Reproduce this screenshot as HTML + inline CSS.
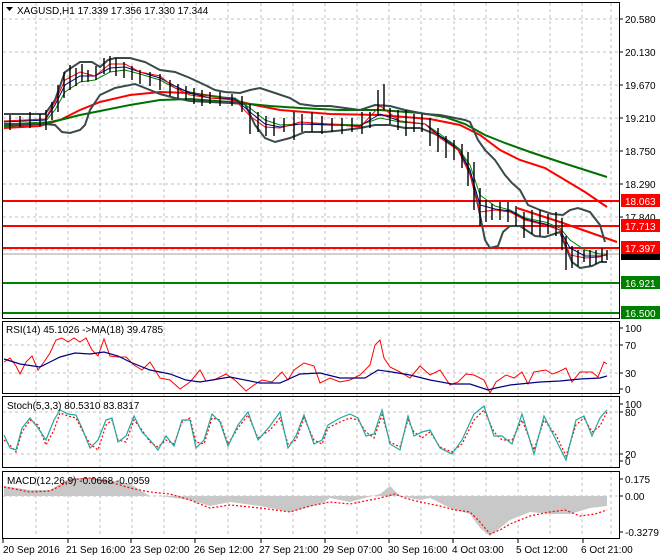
<!DOCTYPE html>
<html><head><meta charset="utf-8"><style>
body{margin:0;background:#fff;}
svg{display:block;font-family:"Liberation Sans",sans-serif;}
text{font-size:10px;fill:#000;}
</style></head><body>
<svg width="660" height="560" viewBox="0 0 660 560" xmlns="http://www.w3.org/2000/svg">
<rect width="660" height="560" fill="#fff"/>
<!-- grid -->
<g stroke="#c0c0c0" stroke-dasharray="3,3" stroke-width="1">
<path d="M36 3V537M68 3V537M100 3V537M132 3V537M164 3V537M196 3V537M228 3V537M261 3V537M293 3V537M325 3V537M357 3V537M389 3V537M421 3V537M454 3V537M486 3V537M518 3V537M550 3V537M582 3V537M611 3V537"/>
<path d="M3 19H619M3 52H619M3 85H619M3 118H619M3 151H619M3 184H619M3 217H619M3 250H619M3 283H619"/>
<path d="M3 345H619M3 373H619M3 412H619M3 454H619M3 496H619"/>
</g>
<!-- panel frames -->
<g fill="none" stroke="#000" stroke-width="1">
<rect x="2.5" y="2.5" width="617" height="316"/>
<rect x="2.5" y="321.5" width="617" height="72"/>
<rect x="2.5" y="396.5" width="617" height="71"/>
<rect x="2.5" y="471.5" width="617" height="67"/>
</g>
<!-- ticks -->
<g stroke="#000"><path d="M620 19h3M620 52h3M620 85h3M620 118h3M620 151h3M620 184h3M620 217h3M620 328h3M620 345h3M620 373h3M620 389h3M620 404h3M620 412h3M620 454h3M620 461h3M620 479h3M620 496h3M620 532h3"/></g>
<!-- horizontal levels -->
<g stroke-width="2">
<path d="M3 201H619M3 226H619M3 248H619" stroke="#ff0000"/>
<path d="M3 283H619M3 313H619" stroke="#008000"/>
</g>
<path d="M3 254H619" stroke="#a0a0a0"/>
<!-- long MAs -->
<polyline fill="none" stroke="#ff0000" stroke-width="2" points="4,128 40,126 60,120 80,110 100,102 130,95 160,92 190,93 220,97 250,104 280,110 330,114 380,115 430,119 460,125 480,135 500,150 520,160 545,168 565,180 585,192 607,207"/>
<polyline fill="none" stroke="#007000" stroke-width="2" points="4,126 40,124 60,120 80,115 100,111 130,105 160,100 190,99 230,102 270,106 300,108 340,110 380,110 420,113 445,117 465,124 485,135 505,143 530,152 560,162 585,170 607,177"/>
<polyline fill="none" stroke="#ff0000" stroke-width="2" points="517,208 560,222 617,242"/>
<!-- bollinger -->
<g fill="none" stroke="#3a4a4a" stroke-width="2">
<polyline points="4,114 45,114 55,100 65,72 80,62 92,62 100,67 108,60 115,58 130,58 145,62 160,70 175,72 190,78 205,85 215,90 225,92 240,93 250,90 260,88 275,93 290,98 300,104 315,106 330,106 345,108 360,110 375,105 390,106 405,110 425,114 440,115 455,118 465,120 470,122 478,140 485,150 495,160 505,175 512,183 520,190 528,205 540,210 552,214 563,215 570,210 578,208 590,212 600,225 605,242"/>
<polyline points="4,124 45,124 55,125 62,132 70,133 80,130 85,125 90,110 100,95 115,88 135,84 150,90 160,94 175,98 190,101 210,102 230,103 245,104 255,125 265,138 275,142 290,138 305,132 325,132 345,130 360,128 375,125 390,125 405,128 420,128 435,134 450,142 460,150 470,172 478,205 485,240 490,248 498,246 503,232 510,226 520,226 535,236 545,237 560,232 567,250 572,262 580,268 592,266 600,262 607,262"/>
</g>
<!-- inner MAs -->
<polyline fill="none" stroke="#008000" stroke-width="1" points="4,124 45,122 55,110 65,92 80,82 95,80 110,72 125,70 140,74 160,80 175,88 190,92 210,96 235,98 250,108 265,120 280,125 300,124 330,124 360,125 380,118 400,122 425,124 440,134 458,148 470,165 480,195 495,206 510,210 525,218 545,222 560,228 570,240 585,250 600,254 607,254"/>
<polyline fill="none" stroke="#000080" stroke-width="1" points="4,122 45,120 55,105 65,85 80,76 95,76 110,68 125,67 140,72 160,78 175,86 190,93 210,98 235,99 250,112 265,124 280,127 300,124 330,125 360,126 380,114 400,121 425,124 440,136 458,150 470,170 480,205 495,209 510,211 525,219 545,224 560,230 570,248 585,256 600,256 607,255"/>
<polyline fill="none" stroke="#ff0000" stroke-width="1" points="4,121 45,119 55,102 65,80 80,72 95,76 110,64 125,64 140,72 160,76 175,88 190,95 210,98 235,100 250,116 265,127 280,128 300,122 330,124 360,127 380,106 400,121 425,124 440,138 458,150 470,175 480,212 495,210 510,212 525,220 545,225 560,230 570,255 585,258 600,257 607,254"/>
<!-- candles -->
<g stroke="#000" stroke-width="1.4">
<path d="M10 115V130M20 116V127M30 112V128M40 114V126M46 110V130M52 102V120M58 85V112M64 72V98M70 65V90M76 68V86M82 64V82M88 70V82M96 66V80M104 58V74M110 56V72M116 58V76M124 62V78M132 66V80M140 70V84M150 72V86M160 74V90M170 80V96M178 84V98M186 86V100M194 88V104M202 90V106M210 92V104M220 92V106M232 94V106M242 96V112M250 104V134M258 112V132M266 116V136M274 118V136M284 118V132M294 112V140M302 114V132M312 112V132M322 116V134M332 118V132M342 118V134M352 118V132M362 112V134M370 112V128M378 90V116M384 84V110M390 108V124M398 110V130M406 110V136M414 114V132M422 114V132M430 118V146M438 128V152M446 136V158M454 140V160M462 144V168M468 152V186M474 162V210M480 188V226M486 200V222M492 204V220M500 202V220M508 202V222M516 206V226M524 212V238M532 210V234M540 210V236M548 214V234M556 212V236M562 218V250M566 236V270M572 246V268M578 250V266M584 250V262M590 250V266M596 250V264M602 248V262M607 250V260"/>
</g>
<!-- RSI -->
<polyline fill="none" stroke="#ff0000" stroke-width="1" points="4,362 10,358 16,366 20,374 26,362 32,356 38,370 44,362 50,353 56,340 62,338 68,342 74,338 80,342 86,338 92,350 98,356 104,339 110,356 118,357 126,357 134,365 142,370 150,362 160,378 170,380 180,389 190,382 200,370 206,381 214,380 226,374 236,381 246,391 254,385 262,380 272,382 282,372 288,380 294,370 304,363 314,366 320,383 330,378 340,382 350,380 360,375 370,365 375,345 380,340 384,358 390,367 400,372 410,378 420,366 430,375 440,370 450,385 458,382 466,374 474,375 484,380 490,393 496,382 506,375 514,378 522,372 528,384 534,372 546,370 552,374 558,372 566,368 572,382 580,372 592,372 598,377 604,362 607,364"/>
<polyline fill="none" stroke="#000080" stroke-width="1.2" points="4,359 20,364 40,367 50,362 60,357 75,353 90,354 104,352 118,356 130,362 150,370 170,374 186,380 200,382 230,377 260,383 280,383 300,374 320,373 340,378 365,378 378,370 392,372 410,375 430,380 452,384 470,384 488,390 496,388 510,385 540,382 560,381 580,379 600,378 607,376"/>
<!-- Stoch -->
<polyline fill="none" stroke="#ff0000" stroke-width="1.2" stroke-dasharray="2,2" points="4,440 10,445 16,452 22,432 30,420 38,425 46,445 54,430 60,413 68,416 76,418 82,430 90,444 98,450 106,425 112,420 118,440 126,442 134,420 142,430 150,442 158,447 166,440 174,444 182,422 190,418 196,442 204,444 212,418 220,420 228,444 238,428 248,415 258,438 270,430 280,418 288,444 296,440 304,418 314,440 322,444 328,428 340,422 350,418 358,420 366,432 374,438 382,415 390,442 400,447 408,420 414,432 422,438 430,432 440,447 452,452 462,444 474,420 484,410 494,432 502,440 512,440 522,420 534,450 544,420 556,435 566,456 576,425 584,418 592,432 600,426 607,412"/>
<polyline fill="none" stroke="#20a8a0" stroke-width="1.2" points="4,435 10,448 16,450 22,428 30,418 38,428 46,440 54,420 60,410 68,414 76,415 82,428 90,448 98,440 106,420 112,418 118,442 126,436 134,416 142,432 150,440 158,450 166,436 174,446 182,420 190,420 196,448 204,440 212,414 220,422 228,446 238,425 248,412 258,440 270,426 280,412 288,448 296,436 304,415 314,444 322,440 328,425 340,418 350,414 358,418 366,436 374,434 382,410 390,444 400,450 408,416 414,436 422,432 430,430 440,448 452,454 462,440 474,414 484,406 494,436 502,436 512,444 522,414 534,454 544,416 556,440 566,460 576,420 584,416 592,436 600,418 607,410"/>
<!-- MACD histogram -->
<polygon fill="#c8c8c8" points="4,496 4,486 30,490 50,490 60,484 70,478 90,478 110,480 130,484 140,490 150,496 160,496 190,500 210,506 230,502 260,506 290,512 320,504 330,498 350,502 380,494 390,486 400,496 420,500 430,498 450,508 470,514 480,528 490,536 500,528 510,520 530,512 550,514 570,514 590,508 607,506 607,496"/>
<polyline fill="none" stroke="#ff0000" stroke-width="1.2" stroke-dasharray="2,2" points="4,487 30,492 50,491 60,486 70,480 90,478 110,482 130,488 150,492 170,494 190,500 210,508 230,505 260,508 290,512 310,506 330,502 350,504 380,498 395,494 405,498 420,502 440,506 455,510 470,512 480,522 490,534 500,530 510,524 530,516 550,512 565,510 580,516 595,514 607,510"/>
<!-- header -->
<path d="M6 7h7l-3.5 4z" fill="#000"/>
<text x="17" y="14">XAGUSD,H1  17.339 17.356 17.330 17.344</text>
<text x="6" y="333">RSI(14) 45.1026  -&gt;MA(18) 39.4785</text>
<text x="7" y="409">Stoch(5,3,3) 80.5310 83.8317</text>
<text x="7" y="484">MACD(12,26,9) -0.0668 -0.0959</text>
<!-- price axis -->
<g>
<text x="625" y="23">20.580</text>
<text x="625" y="56">20.130</text>
<text x="625" y="89">19.670</text>
<text x="625" y="122">19.210</text>
<text x="625" y="155">18.750</text>
<text x="625" y="188">18.290</text>
<text x="625" y="221">17.840</text>
</g>
<rect x="621" y="194" width="39" height="13" fill="#ff0000"/><text x="625" y="205" fill="#fff" style="fill:#fff">18.063</text>
<rect x="621" y="219" width="39" height="13" fill="#ff0000"/><text x="625" y="230" style="fill:#fff">17.713</text>
<rect x="621" y="241" width="39" height="13" fill="#ff0000"/><text x="625" y="252" style="fill:#fff">17.397</text>
<rect x="621" y="254" width="39" height="6" fill="#000"/>
<rect x="621" y="276" width="39" height="13" fill="#008000"/><text x="625" y="287" style="fill:#fff">16.921</text>
<rect x="621" y="306" width="39" height="13" fill="#008000"/><text x="625" y="317" style="fill:#fff">16.500</text>
<text x="625" y="332">100</text><text x="625" y="349">70</text><text x="625" y="377">30</text><text x="625" y="393">0</text>
<text x="625" y="408">100</text><text x="625" y="416">80</text><text x="625" y="458">20</text><text x="625" y="465">0</text>
<text x="625" y="483">0.175</text><text x="625" y="500">0.00</text><text x="625" y="536">-0.3279</text>
<!-- date axis -->
<g stroke="#000"><path d="M3 539v4M68 539v4M131 539v4M195 539v4M261 539v4M325 539v4M389 539v4M453 539v4M518 539v4M583 539v4"/></g>
<text x="3" y="553">20 Sep 2016</text>
<text x="66" y="553">21 Sep 16:00</text>
<text x="130" y="553">23 Sep 02:00</text>
<text x="194" y="553">26 Sep 12:00</text>
<text x="259" y="553">27 Sep 21:00</text>
<text x="323" y="553">29 Sep 07:00</text>
<text x="388" y="553">30 Sep 16:00</text>
<text x="452" y="553">4 Oct 03:00</text>
<text x="516" y="553">5 Oct 12:00</text>
<text x="581" y="553">6 Oct 21:00</text>
</svg>
</body></html>
